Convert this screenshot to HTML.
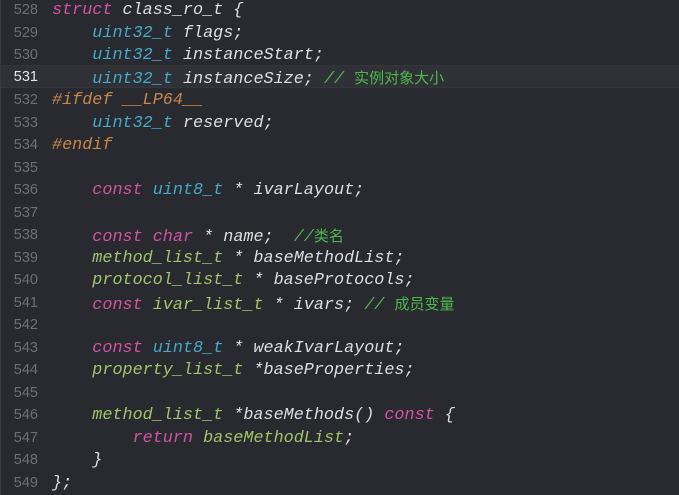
<!DOCTYPE html>
<html><head><meta charset="utf-8"><style>
html,body{margin:0;padding:0;}
body{width:679px;height:495px;background:#292a30;overflow:hidden;position:relative;}
.l{position:absolute;left:0;width:679px;height:22.5px;line-height:22.5px;}
.hl{background:#303137;border-top:1px solid #35363c;border-bottom:1px solid #35363c;box-sizing:border-box;}
.n{position:absolute;left:0;top:1px;width:38px;text-align:right;font-family:"Liberation Sans",sans-serif;font-size:14.5px;color:#6e6f75;}
.hl .n{color:#e6e6e6;top:0px;}
.c{position:absolute;left:52px;top:2px;font-family:"Liberation Mono","Noto Sans CJK SC",monospace;font-style:italic;font-size:16.8px;color:#dedee0;white-space:pre;}
.hl .c{top:1px;}
.k{color:#d2539f}.t{color:#44a8c8}.p{color:#a0c46a}.pp{color:#c8874a}.cm{color:#4db74b}
.cm .z{font-style:normal;font-family:"Noto Sans CJK SC",sans-serif;font-size:15px;}
.edge{position:absolute;left:0;top:0;width:1px;height:495px;background:#3a3b41;}
</style></head><body>
<div class="l" style="top:-2px"><span class="n">528</span><span class="c"><span class="k">struct</span> class_ro_t {</span></div>
<div class="l" style="top:20.5px"><span class="n">529</span><span class="c">    <span class="t">uint32_t</span> flags;</span></div>
<div class="l" style="top:43px"><span class="n">530</span><span class="c">    <span class="t">uint32_t</span> instanceStart;</span></div>
<div class="l hl" style="top:65px"><span class="n">531</span><span class="c">    <span class="t">uint32_t</span> instanceSize; <span class="cm">// <span class="z">实例对象大小</span></span></span></div>
<div class="l" style="top:88px"><span class="n">532</span><span class="c"><span class="pp">#ifdef __LP64__</span></span></div>
<div class="l" style="top:110.5px"><span class="n">533</span><span class="c">    <span class="t">uint32_t</span> reserved;</span></div>
<div class="l" style="top:133px"><span class="n">534</span><span class="c"><span class="pp">#endif</span></span></div>
<div class="l" style="top:155.5px"><span class="n">535</span></div>
<div class="l" style="top:178px"><span class="n">536</span><span class="c">    <span class="k">const</span> <span class="t">uint8_t</span> * ivarLayout;</span></div>
<div class="l" style="top:200.5px"><span class="n">537</span></div>
<div class="l" style="top:223px"><span class="n">538</span><span class="c">    <span class="k">const</span> <span class="k">char</span> * name;  <span class="cm">//<span class="z">类名</span></span></span></div>
<div class="l" style="top:245.5px"><span class="n">539</span><span class="c">    <span class="p">method_list_t</span> * baseMethodList;</span></div>
<div class="l" style="top:268px"><span class="n">540</span><span class="c">    <span class="p">protocol_list_t</span> * baseProtocols;</span></div>
<div class="l" style="top:290.5px"><span class="n">541</span><span class="c">    <span class="k">const</span> <span class="p">ivar_list_t</span> * ivars; <span class="cm">// <span class="z">成员变量</span></span></span></div>
<div class="l" style="top:313px"><span class="n">542</span></div>
<div class="l" style="top:335.5px"><span class="n">543</span><span class="c">    <span class="k">const</span> <span class="t">uint8_t</span> * weakIvarLayout;</span></div>
<div class="l" style="top:358px"><span class="n">544</span><span class="c">    <span class="p">property_list_t</span> *baseProperties;</span></div>
<div class="l" style="top:380.5px"><span class="n">545</span></div>
<div class="l" style="top:403px"><span class="n">546</span><span class="c">    <span class="p">method_list_t</span> *baseMethods() <span class="k">const</span> {</span></div>
<div class="l" style="top:425.5px"><span class="n">547</span><span class="c">        <span class="k">return</span> <span class="p">baseMethodList</span>;</span></div>
<div class="l" style="top:448px"><span class="n">548</span><span class="c">    }</span></div>
<div class="l" style="top:470.5px"><span class="n">549</span><span class="c">};</span></div>
<div class="edge"></div>
</body></html>
